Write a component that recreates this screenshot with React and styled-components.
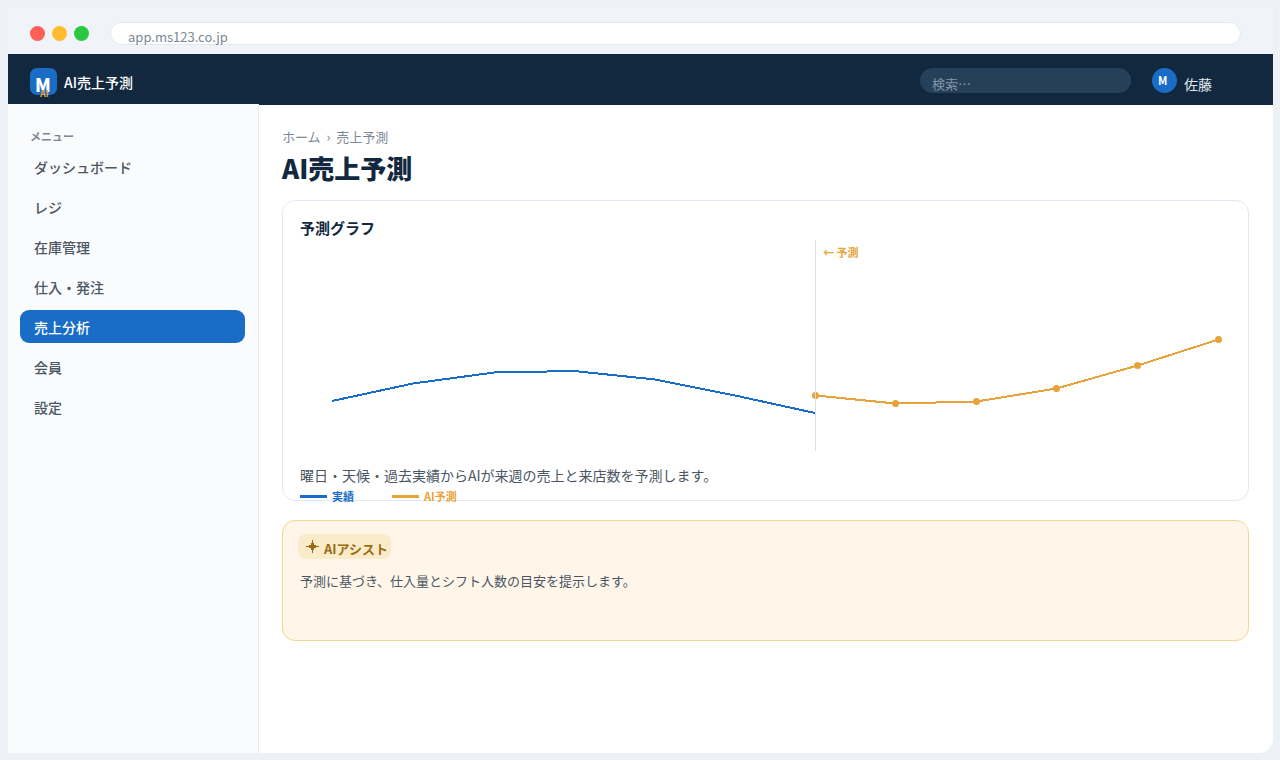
import React from "react";
import styled, { createGlobalStyle } from "styled-components";

const GlobalStyle = createGlobalStyle`
  *, *::before, *::after { box-sizing: border-box; }
  body {
    margin: 0;
    background: #edf1f6;
    font-family: "Noto Sans CJK JP", "Noto Sans", sans-serif;
    color: #12283f;
  }
`;

const Page = styled.div`
  height: 760px;
  padding: 8px 7px 7px 8px;
  overflow: hidden;
`;

const Window = styled.div`
  height: 745px;
  display: flex;
  flex-direction: column;
  background: #ffffff;
  border-radius: 0 0 14px 0;
  overflow: hidden;
`;

const Chrome = styled.div`
  height: 46px;
  flex: none;
  display: flex;
  align-items: flex-start;
  padding: 14px 32px 0 22px;
  background: #f0f3f8;
`;

const Lights = styled.div`
  display: flex;
  gap: 7px;
  padding-top: 4px;
  margin-right: 21px;
`;

const Light = styled.span`
  width: 15px;
  height: 15px;
  border-radius: 50%;
  background: ${(p) => p.$color};
`;

const AddressBar = styled.div`
  flex: 1;
  height: 23px;
  border: 1px solid #e2e8f0;
  border-radius: 12px;
  background: #ffffff;
  padding: 4px 17px 0;
  font-size: 13px;
  line-height: 20px;
  color: #7b8794;
`;

const NavBar = styled.header`
  height: 51px;
  flex: none;
  display: flex;
  align-items: flex-start;
  padding: 14px 61px 0 22px;
  background: #12283f;
  color: #ffffff;
`;

const Logo = styled.div`
  position: relative;
  width: 27px;
  height: 27px;
  border-radius: 7px;
  background: #1a6dc6;
  font-size: 18px;
  font-weight: 900;
  line-height: 32px;
  padding-left: 5px;
`;

const LogoTag = styled.span`
  position: absolute;
  left: 10px;
  top: 19px;
  font-size: 9px;
  font-weight: 700;
  line-height: 13px;
  color: #e8a23a;
`;

const Brand = styled.div`
  margin-left: 7px;
  font-size: 14px;
  font-weight: 500;
  line-height: 28px;
`;

const Search = styled.div`
  width: 211px;
  height: 25px;
  margin-left: auto;
  border-radius: 13px;
  background: #274059;
  padding-left: 12px;
  font-size: 13px;
  line-height: 31px;
  color: #8295a8;
`;

const Avatar = styled.div`
  width: 25px;
  height: 25px;
  margin-left: 21px;
  border-radius: 50%;
  background: #1a6dc6;
  padding-left: 6px;
  font-size: 11px;
  font-weight: 700;
  line-height: 25px;
`;

const UserName = styled.div`
  margin-left: 7px;
  font-size: 14px;
  line-height: 32px;
  color: #e2e8f0;
`;

const Body = styled.div`
  flex: 1;
  display: flex;
  min-height: 0;
`;

const Sidebar = styled.nav`
  width: 251px;
  flex: none;
  margin-top: -1px;
  padding: 22px 13px 0 12px;
  background: #fafbfd;
  border-right: 1px solid #e2e8f0;
`;

const MenuLabel = styled.div`
  padding-left: 10px;
  margin-bottom: 4px;
  font-size: 11px;
  font-weight: 700;
  line-height: 20px;
  color: #7b8794;
`;

const MenuItem = styled.div`
  height: 33px;
  margin-bottom: 7px;
  padding-left: 14px;
  border-radius: 9px;
  font-size: 14px;
  font-weight: 500;
  line-height: 34px;
  color: ${(p) => (p.$active ? "#ffffff" : "#4a5663")};
  background: ${(p) => (p.$active ? "#1a6dc6" : "transparent")};
`;

const Main = styled.main`
  flex: 1;
  padding: 22px 24px 0 23px;
`;

const Breadcrumb = styled.div`
  display: flex;
  font-size: 13px;
  line-height: 20px;
  color: #7b8794;
  white-space: pre;
`;

const Title = styled.h1`
  margin: 2px 0 13px;
  font-size: 26px;
  font-weight: 900;
  line-height: 38px;
  color: #12283f;
`;

const ChartCard = styled.section`
  height: 301px;
  border: 1px solid #e2e8f2;
  border-radius: 13px;
  padding: 16px 17px 0;
`;

const CardTitle = styled.h2`
  margin: 0 0 1px;
  font-size: 15px;
  font-weight: 700;
  line-height: 22px;
`;

const Plot = styled.svg`
  display: block;
  width: 931px;
  height: 213px;
`;

const PlotLabel = styled.text`
  font-size: 11px;
  font-weight: 700;
  fill: #e8a23a;
`;

const ChartNote = styled.p`
  margin: 11px 0 0;
  font-size: 14px;
  line-height: 22px;
  color: #4a5663;
`;

const Legend = styled.div`
  display: flex;
  padding-top: 1px;
`;

const LegendItem = styled.div`
  display: flex;
  align-items: center;
  width: 92px;
  font-size: 11px;
  font-weight: 700;
  line-height: 18px;
  color: ${(p) => p.$color};

  &::before {
    content: "";
    width: 27px;
    height: 3px;
    margin-right: 5px;
    background: ${(p) => p.$color};
  }
`;

const AssistCard = styled.section`
  height: 121px;
  margin-top: 19px;
  padding: 13px 17px 0 15px;
  border: 1px solid #f0d890;
  border-radius: 13px;
  background: #fff6e9;
`;

const Badge = styled.div`
  display: flex;
  width: 93px;
  height: 25px;
  padding: 6px 0 0 8px;
  border-radius: 8px;
  background: #faebcb;
  color: #9a6b12;
  font-size: 13px;
  font-weight: 700;
  line-height: 18px;
  white-space: nowrap;

  svg { flex: none; margin-right: 5px; }
`;

const AssistText = styled.p`
  margin: 12px 0 0 2px;
  font-size: 13px;
  line-height: 20px;
  color: #4a5663;
`;

const MENU = ["ダッシュボード", "レジ", "在庫管理", "仕入・発注", "売上分析", "会員", "設定"];

const ACTUAL = [[32, 161], [113, 143.5], [194, 132.5], [274, 131], [355, 139.5], [435, 155.5], [515, 173]];
const FORECAST = [[515.5, 155.5], [595.5, 163.5], [676.5, 161.5], [756.5, 148.5], [837.5, 125.5], [918.5, 99.5]];

const toPoints = (series) => series.map((p) => p.join(",")).join(" ");

function ForecastPlot() {
  return (
    <Plot viewBox="0 0 931 213" fill="none">
      <g shapeRendering="crispEdges" strokeWidth="2">
        <polyline points={toPoints(ACTUAL)} stroke="#1a6dc6" />
        <polyline points={toPoints(FORECAST)} stroke="#e8a23a" />
      </g>
      {FORECAST.map(([x, y]) => (
        <circle key={x} cx={x} cy={y} r="3.5" fill="#e8a23a" />
      ))}
      <path d="M515.5 0V211" stroke="#d8e0e8" />
      <PlotLabel x="523" y="17">← 予測</PlotLabel>
    </Plot>
  );
}

export default function App() {
  return (
    <>
      <GlobalStyle />
      <Page>
        <Window>
          <Chrome>
            <Lights>
              <Light $color="#ff5f57" />
              <Light $color="#ffbd2e" />
              <Light $color="#28c940" />
            </Lights>
            <AddressBar>app.ms123.co.jp</AddressBar>
          </Chrome>
          <NavBar>
            <Logo>M<LogoTag>AI</LogoTag></Logo>
            <Brand>AI売上予測</Brand>
            <Search>検索…</Search>
            <Avatar>M</Avatar>
            <UserName>佐藤</UserName>
          </NavBar>
          <Body>
            <Sidebar>
              <MenuLabel>メニュー</MenuLabel>
              {MENU.map((label) => (
                <MenuItem key={label} $active={label === "売上分析"}>{label}</MenuItem>
              ))}
            </Sidebar>
            <Main>
              <Breadcrumb>ホーム  ›  売上予測</Breadcrumb>
              <Title>AI売上予測</Title>
              <ChartCard>
                <CardTitle>予測グラフ</CardTitle>
                <ForecastPlot />
                <ChartNote>曜日・天候・過去実績からAIが来週の売上と来店数を予測します。</ChartNote>
                <Legend>
                  <LegendItem $color="#1a6dc6">実績</LegendItem>
                  <LegendItem $color="#e8a23a">AI予測</LegendItem>
                </Legend>
              </ChartCard>
              <AssistCard>
                <Badge>
                  <svg width="13" height="13" viewBox="0 0 13 13" fill="currentColor" shapeRendering="crispEdges">
                    <path d="M6 0H7V3H8V5H10V6H13V7H10V8H8V10H7V13H6V10H5V8H3V7H0V6H3V5H5V3H6Z" />
                  </svg>
                  AIアシスト
                </Badge>
                <AssistText>予測に基づき、仕入量とシフト人数の目安を提示します。</AssistText>
              </AssistCard>
            </Main>
          </Body>
        </Window>
      </Page>
    </>
  );
}
